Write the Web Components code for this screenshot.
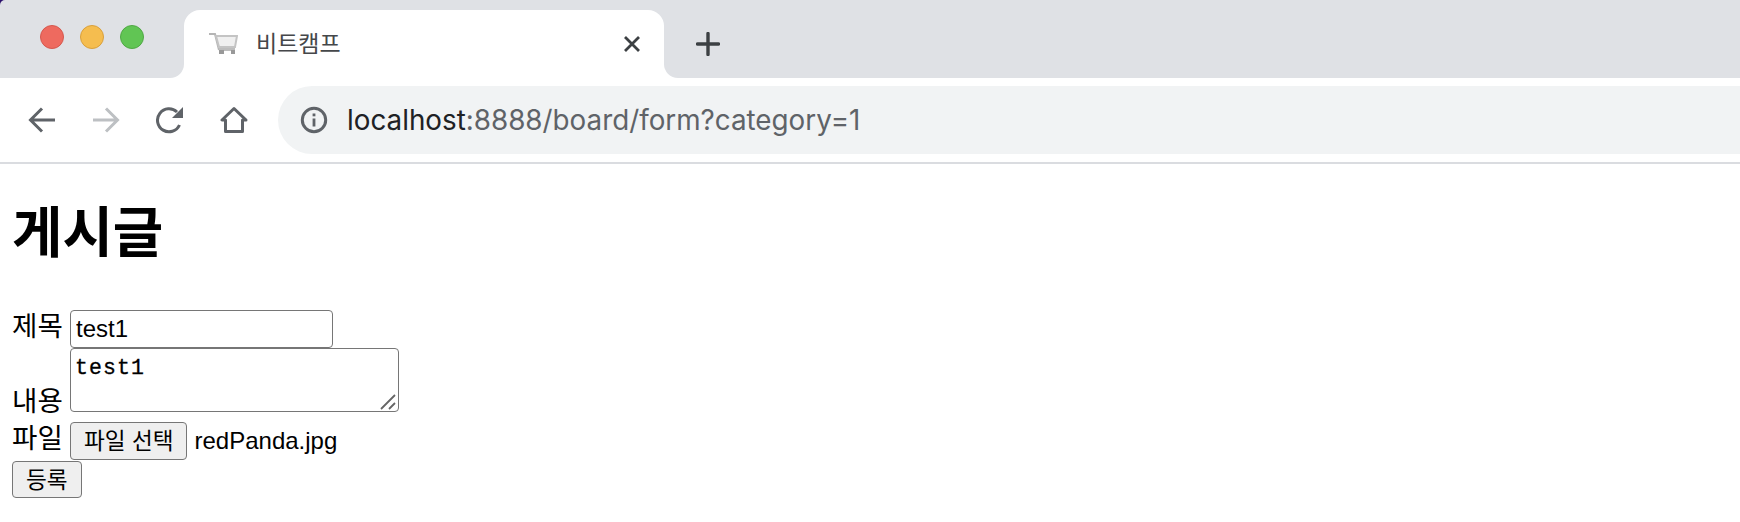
<!DOCTYPE html>
<html lang="ko">
<head>
<meta charset="utf-8">
<title>비트캠프</title>
<style>
    html, body { margin: 0; padding: 0; background: #fff; overflow: hidden; }
</style>
</head>
<body>
<browser-chrome tab-title="비트캠프" host="localhost" rest=":8888/board/form?category=1"></browser-chrome>
<board-form></board-form>

<script>
// tab strip + toolbar
class BrowserChrome extends HTMLElement {
    connectedCallback() {
        const root = this.attachShadow({ mode: 'open' });
        root.innerHTML = `
            <style>
                :host { display: block; height: 164px; background: #fff; overflow: hidden; }
                .strip-wrap { background: linear-gradient(135deg, #2b0f6b 4px, #fff 4px); }
                .strip {
                    height: 78px;
                    padding-top: 10px;
                    box-sizing: border-box;
                    background: #dfe1e5;
                    border-top-left-radius: 5px;
                }
                .strip-row {
                    display: flex;
                    height: 68px;
                    background: linear-gradient(#dfe1e5 50%, #fff 50%);
                }
                .pocket { background: #dfe1e5; }
                .pocket.left {
                    width: 184px;
                    border-bottom-right-radius: 14px;
                }
                .lights { display: flex; gap: 16px; padding: 15px 0 0 40px; }
                .light { width: 22px; height: 22px; border-radius: 50%; border: 1px solid; }
                .red { background: #ee6a5f; border-color: #d5584e; }
                .yellow { background: #f5bd4f; border-color: #d9a03c; }
                .green { background: #61c554; border-color: #50a845; }
                .tab {
                    width: 480px;
                    background: #fff;
                    border-radius: 16px 16px 0 0;
                    display: flex;
                    align-items: center;
                    padding: 0 24px;
                    box-sizing: border-box;
                }
                .favicon { width: 30px; height: 24px; margin: 0 18px 2px 0; }
                .title {
                    flex: 1;
                    padding-bottom: 4px;
                    font: 23px "Noto Sans CJK KR", "Liberation Sans", sans-serif;
                    color: #45474a;
                }
                .pocket.right {
                    flex: 1;
                    border-bottom-left-radius: 14px;
                    display: flex;
                    align-items: center;
                    padding-left: 32px;
                }
                .toolbar {
                    height: 84px;
                    display: flex;
                    align-items: center;
                    padding-left: 28px;
                    box-sizing: border-box;
                }
                .nav { display: flex; gap: 36px; align-items: center; }
                .nav svg { display: block; width: 28px; height: 28px; }
                .omnibox {
                    flex: 1;
                    margin-left: 30px;
                    height: 68px;
                    background: #f1f3f4;
                    border-radius: 34px 0 0 34px;
                    display: flex;
                    align-items: center;
                    padding-left: 22px;
                }
                .omnibox svg { width: 28px; height: 28px; margin-right: 19px; }
                .url { font: 27.8px Inter, "Liberation Sans", sans-serif; color: #5f6368; white-space: nowrap; }
                .url b { font-weight: 400; color: #202124; }
                .rule { height: 2px; background: #dadce0; }
            </style>
            <div class="strip-wrap">
            <div class="strip">
                <div class="strip-row">
                    <div class="pocket left">
                        <div class="lights">
                            <span class="light red"></span>
                            <span class="light yellow"></span>
                            <span class="light green"></span>
                        </div>
                    </div>
                    <div class="tab">
                        <svg class="favicon" viewBox="0 0 30 24" fill="none">
                            <path d="M1 3h6l4 16" stroke="#b5b5b5" stroke-width="2"/>
                            <path d="M8 5h21l-2 11H11z" stroke="#c4c4c4" stroke-width="2" fill="#f0f0f0"/>
                            <path d="M11 17h16v3H11z" fill="#bdbdbd"/>
                            <rect x="11" y="19" width="5" height="4" fill="#999"/>
                            <rect x="23" y="19" width="4" height="4" fill="#999"/>
                        </svg>
                        <span class="title">${this.getAttribute('tab-title')}</span>
                        <svg width="16" height="16" viewBox="0 0 16 16" fill="none">
                            <path d="M1 1l14 14M15 1L1 15" stroke="#3c4043" stroke-width="2.8"/>
                        </svg>
                    </div>
                    <div class="pocket right">
                        <svg width="24" height="24" viewBox="0 0 24 24" fill="none">
                            <path d="M12 1.5v21M1.5 12h21" stroke="#3c4043" stroke-width="3.4" stroke-linecap="round"/>
                        </svg>
                    </div>
                </div>
            </div>
            </div>
            <div class="toolbar">
                <div class="nav">
                    <svg viewBox="0 0 28 28" fill="none" stroke="#5f6368" stroke-width="3">
                        <path d="M27 14H3M14 2.5L2.5 14 14 25.5"/>
                    </svg>
                    <svg viewBox="0 0 28 28" fill="none" stroke="#bdc0c3" stroke-width="3">
                        <path d="M1 14h24M14 2.5L25.5 14 14 25.5"/>
                    </svg>
                    <svg viewBox="0 0 28 28" fill="none">
                        <path d="M23.5 19A11.5 11.5 0 1 1 21 6" stroke="#5f6368" stroke-width="3"/>
                        <path d="M27 1v11H16z" fill="#5f6368"/>
                    </svg>
                    <svg viewBox="0 0 28 28" fill="none" stroke="#5f6368" stroke-width="3" stroke-linejoin="round">
                        <path d="M14 2.5L2 14h3.5v11.5h17V14H26z"/>
                    </svg>
                </div>
                <div class="omnibox">
                    <svg viewBox="0 0 28 28" fill="none">
                        <circle cx="14" cy="14" r="11.7" stroke="#5f6368" stroke-width="3"/>
                        <rect x="12.6" y="12.5" width="2.8" height="8" fill="#5f6368"/>
                        <rect x="12.6" y="7.5" width="2.8" height="2.8" fill="#5f6368"/>
                    </svg>
                    <span class="url"><b>${this.getAttribute('host')}</b>${this.getAttribute('rest')}</span>
                </div>
            </div>
            <div class="rule"></div>
        `;
    }
}

// the page below the chrome
class BoardForm extends HTMLElement {
    connectedCallback() {
        const root = this.attachShadow({ mode: 'open' });
        root.innerHTML = `
            <style>
                :host {
                    display: block;
                    padding: 0 12px;
                    font: 24px "Liberation Sans", "Noto Sans CJK KR", sans-serif;
                    color: #000;
                }
                h1 {
                    margin: 0;
                    padding-top: 38px;
                    height: 146px;
                    box-sizing: border-box;
                    font: 700 54.8px/62px "Liberation Sans", "Noto Sans CJK KR", sans-serif;
                }
                .line { display: flex; align-items: flex-end; height: 38px; white-space: nowrap; }
                label {
                    width: 58px;
                    padding-bottom: 14px;
                    font: 27.6px/20px "Noto Sans CJK KR", sans-serif;
                }
                .field {
                    box-sizing: border-box;
                    border: 1.5px solid #767676;
                    border-radius: 4px;
                    background: #fff;
                    color: #000;
                    outline: none;
                    margin: 0;
                    display: block;
                }
                input.field {
                    width: 263px;
                    height: 38px;
                    padding: 0 5px;
                    font: 24px "Liberation Sans", sans-serif;
                }
                .area { position: relative; display: block; }
                textarea.field {
                    width: 329px;
                    height: 64px;
                    padding: 7px 4px;
                    font: 21.5px/24px "Liberation Mono", monospace;
                    letter-spacing: 1.1px;
                    -webkit-text-stroke: 0.3px #000;
                    resize: none;
                    overflow: hidden;
                }
                .grip { position: absolute; right: 3px; bottom: 2px; width: 16px; height: 16px; }
                .area-line { height: 64px; }
                .area-line label { padding-bottom: 3px; }
                .file-line { margin-top: 10px; }
                .submit-line { margin-top: 1px; height: 37px; }
                .btn {
                    box-sizing: border-box;
                    display: block;
                    height: 100%;
                    margin: 0;
                    padding: 0 13px 3px;
                    border: 1.5px solid #767676;
                    border-radius: 4px;
                    background: #efefef;
                    color: #000;
                    font: 22.6px "Noto Sans CJK KR", sans-serif;
                }
                .file { margin-left: 7px; align-self: center; }
            </style>
            <h1>게시글</h1>
            <div class="line"><label>제목</label><input class="field" value="test1"></div>
            <div class="line area-line"><label>내용</label><span class="area"><textarea class="field">test1</textarea><svg class="grip" viewBox="0 0 16 16" fill="none" stroke="#666" stroke-width="1.8"><path d="M1 15L15 1M9 15l6-6"/></svg></span></div>
            <div class="line file-line"><label>파일</label><button type="button" class="btn">파일 선택</button><span class="file">redPanda.jpg</span></div>
            <div class="line submit-line"><button type="button" class="btn">등록</button></div>
        `;
    }
}

customElements.define('browser-chrome', BrowserChrome);
customElements.define('board-form', BoardForm);
</script>
</body>
</html>
